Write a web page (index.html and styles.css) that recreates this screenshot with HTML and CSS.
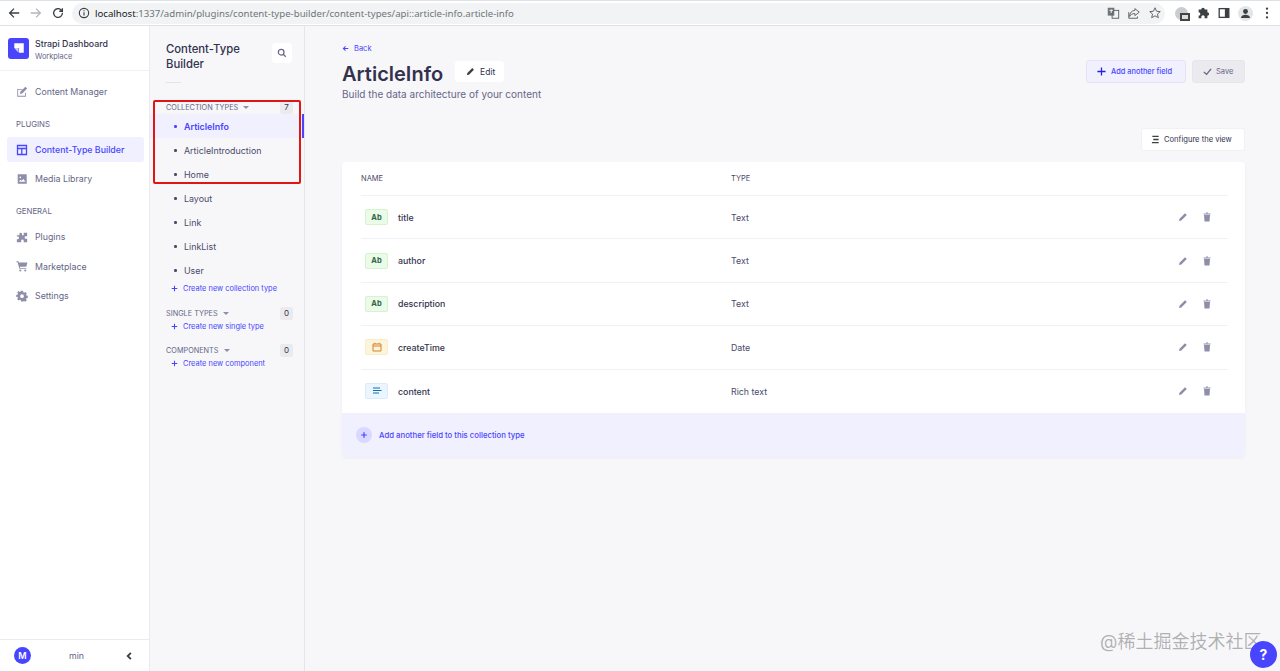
FILE: index.html
```
<!DOCTYPE html>
<html lang="en">
<head>
<meta charset="utf-8">
<title>Strapi</title>
<link rel="stylesheet" href="styles.css">
</head>
<body>
<header class="chrome">
  <div class="chrome-nav">
    <svg class="ci" viewBox="0 0 16 16"><path d="M14 8H3M8 3 3 8l5 5" class="st dark"/></svg>
    <svg class="ci" viewBox="0 0 16 16"><path d="M2 8h11M8 3l5 5-5 5" class="st light"/></svg>
    <svg class="ci" viewBox="0 0 16 16"><path d="M13 8a5 5 0 1 1-1.500-3.500L13 6V2.500M13 6H9.500" class="st dark"/></svg>
  </div>
  <div class="omni">
    <svg class="ci-small" viewBox="0 0 16 16"><circle cx="8" cy="8" r="6.200" class="st dark"/><path d="M8 7v4.400M8 4.200v1.500" class="st dark"/></svg>
    <span class="url"><b>localhost</b>:1337/admin/plugins/content-type-builder/content-types/api::article-info.article-info</span>
    <span class="omni-right">
      <svg class="ci" viewBox="0 0 16 16"><rect x="2" y="2" width="7.500" height="9" class="fillgrey"/><rect x="7" y="5" width="7.500" height="9" class="st thin"/><path d="M4 5h4M6 4v4" class="st whitest"/></svg>
      <svg class="ci" viewBox="0 0 16 16"><path d="M9 3l5 4-5 4V8.600C6 8.600 4 10 3 12c0-4 2-6.500 6-7z" class="st thin"/><path d="M2 7v7h10v-2" class="st thin"/></svg>
      <svg class="ci" viewBox="0 0 16 16"><path d="M8 2l1.800 4 4.200.4-3.200 2.800 1 4.200L8 11.200 4.200 13.400l1-4.200L2 6.400 6.200 6z" class="st thin"/></svg>
    </span>
  </div>
  <div class="chrome-ext">
    <span class="ext-globe"><span class="ext-badge"></span></span>
    <svg class="ci" viewBox="0 0 16 16"><path class="fill-dark" d="M3 4h3a2 2 0 1 1 4 0h3v3a2 2 0 1 1 0 4v3H9.500a2 2 0 1 0-3 0H3v-3a2 2 0 1 0 0-4z"/></svg>
    <svg class="ci" viewBox="0 0 16 16"><rect x="2.500" y="3" width="11" height="10" class="st dark"/><rect x="9" y="3" width="4.500" height="10" class="fill-dark"/></svg>
    <span class="profile"><svg viewBox="0 0 16 16"><circle cx="8" cy="5.500" r="3" class="fill-dark"/><path d="M2.500 13.500c0-3 3-4 5.500-4s5.500 1 5.500 4z" class="fill-dark"/></svg></span>
    <svg class="ci" viewBox="0 0 16 16"><circle cx="8" cy="3" r="1.300" class="fill-dark"/><circle cx="8" cy="8" r="1.300" class="fill-dark"/><circle cx="8" cy="13" r="1.300" class="fill-dark"/></svg>
  </div>
</header>

<div class="app">
  <aside class="side">
    <div class="brand">
      <span class="logo"><svg viewBox="0 0 20 20"><path d="M6 5h9v9h-4.500V9.500H6z" class="fill-white"/><path d="M6 9.500h4v4.500z" class="fill-white soft"/></svg></span>
      <div>
        <div class="brand-name">Strapi Dashboard</div>
        <div class="brand-sub">Workplace</div>
      </div>
    </div>
    <nav class="side-nav">
      <a class="side-link first"><svg viewBox="0 0 14 14"><path d="M1.500 3.500h6v1h-5v7h8V8h1v4.500h-10z" class="fill-grey"/><path d="M4.500 9.500l.8-3L11 1l2 2-5.500 5.500z" class="fill-grey"/></svg>Content Manager</a>
      <div class="side-title plugins">PLUGINS</div>
      <a class="side-link active"><svg viewBox="0 0 14 14"><path class="fill-blue" fill-rule="evenodd" d="M1 1h12v12H1zm1.500 3.500h9v-2h-9zm0 1.500v5.500H6V6zm5 0v5.500h4V6z"/></svg>Content-Type Builder</a>
      <a class="side-link media"><svg viewBox="0 0 14 14"><path class="fill-grey" fill-rule="evenodd" d="M2 1.500h10.500v11H2zm1.500 8.800h7.500L8.500 7 6.500 9 5 8z"/><circle cx="5" cy="5" r="1" class="fill-white"/></svg>Media Library</a>
      <div class="side-title general">GENERAL</div>
      <a class="side-link"><svg viewBox="0 0 14 14"><path class="fill-grey" d="M1 5h3V3.500a1.500 1.500 0 0 1 3 0V5h2V2h4v4h-1.500a1.500 1.500 0 0 0 0 3H13v4H9v-1.500a1.500 1.500 0 0 0-3 0V13H1V9.500h1a1.500 1.500 0 0 0 0-3H1z"/></svg>Plugins</a>
      <a class="side-link"><svg viewBox="0 0 14 14"><path class="fill-grey" d="M0.500 1.500h2.300l.5 1.500h10l-1.300 5H4.500l.4 1.200H12v1H4L1.800 2.500H.5z"/><circle cx="5" cy="12.200" r="1.200" class="fill-grey"/><circle cx="10.800" cy="12.200" r="1.200" class="fill-grey"/></svg>Marketplace</a>
      <a class="side-link"><svg viewBox="0 0 14 14"><path class="fill-grey" fill-rule="evenodd" d="M5.800 1h2.400l.3 1.700 1 .5 1.500-.9 1.600 1.700-.9 1.400.5 1.100 1.600.3v2.400l-1.600.3-.5 1.100.9 1.400-1.600 1.700-1.500-.9-1 .5L8.200 13.500H5.800l-.3-1.700-1-.5-1.500.9-1.600-1.700.9-1.400-.5-1.100L.2 8.200V5.800l1.600-.3.5-1.100-.9-1.400L3 1.300l1.500.9 1-.5zM7 5a2.200 2.200 0 1 0 0 4.400A2.200 2.200 0 0 0 7 5z"/></svg>Settings</a>
    </nav>
    <div class="side-foot">
      <span class="avatar">M</span>
      <span class="foot-name">min</span>
      <svg class="foot-chev" viewBox="0 0 8 8"><path d="M5.500 1.500 3 4l2.500 2.500" class="st dark"/></svg>
    </div>
  </aside>

  <aside class="sub">
    <div class="sub-head">
      <h2>Content-Type Builder</h2>
      <span class="search"><svg viewBox="0 0 12 12"><circle cx="5" cy="5" r="3.400" class="st grey-st"/><path d="M7.500 7.500 10.500 10.500" class="st grey-st"/></svg></span>
    </div>
    <div class="sub-rule"></div>
    <section class="group collection">
      <div class="group-head"><span>COLLECTION TYPES</span><i class="caret"></i><em class="count">7</em></div>
      <ul>
        <li class="current">ArticleInfo</li>
        <li>ArticleIntroduction</li>
        <li>Home</li>
        <li>Layout</li>
        <li>Link</li>
        <li>LinkList</li>
        <li>User</li>
      </ul>
      <a class="create"><svg viewBox="0 0 10 10"><path d="M5 1v8M1 5h8" class="st blue-st"/></svg>Create new collection type</a>
    </section>
    <section class="group">
      <div class="group-head"><span>SINGLE TYPES</span><i class="caret"></i><em class="count">0</em></div>
      <a class="create"><svg viewBox="0 0 10 10"><path d="M5 1v8M1 5h8" class="st blue-st"/></svg>Create new single type</a>
    </section>
    <section class="group">
      <div class="group-head"><span>COMPONENTS</span><i class="caret"></i><em class="count">0</em></div>
      <a class="create"><svg viewBox="0 0 10 10"><path d="M5 1v8M1 5h8" class="st blue-st"/></svg>Create new component</a>
    </section>
  </aside>

  <main class="main">
    <a class="back"><svg viewBox="0 0 10 10"><path d="M9 5H2M5 2 2 5l3 3" class="st blue-st"/></svg>Back</a>
    <div class="title-row">
      <div>
        <div class="title-line">
          <h1>ArticleInfo</h1>
          <button class="btn edit"><svg viewBox="0 0 10 10"><path d="M1 9l.5-2.300L7 1.200 8.800 3 3.300 8.500z" class="fill-dark"/></svg>Edit</button>
        </div>
        <p class="subtitle">Build the data architecture of your content</p>
      </div>
      <div class="actions">
        <button class="btn add"><svg viewBox="0 0 10 10"><path d="M5 .5v9M.5 5h9" class="st deep-st"/></svg>Add another field</button>
        <button class="btn save"><svg viewBox="0 0 10 10"><path d="M1 5.500 4 8.200 9 2" class="st grey-st"/></svg>Save</button>
      </div>
    </div>
    <div class="config-row">
      <button class="btn config"><svg viewBox="0 0 10 10"><path d="M1.500 1.500h7M2.500 5h6M1 8.500h7.500" class="st dark"/></svg>Configure the view</button>
    </div>
    <div class="card">
      <div class="table">
        <div class="row head"><span class="c-name">NAME</span><span class="c-type">TYPE</span></div>
        <div class="row">
          <span class="c-name"><span class="chip green">Ab</span>title</span><span class="c-type">Text</span>
          <span class="row-tools"><svg viewBox="0 0 10 10"><path d="M1 9l.5-2.300L7 1.200 8.800 3 3.300 8.500z" class="fill-grey"/></svg><svg viewBox="0 0 10 10"><path d="M2 3h6l-.5 6.500h-5zM1.500 1.500h7v1h-7z" class="fill-grey"/><path d="M4 .5h2v1H4z" class="fill-grey"/></svg></span>
        </div>
        <div class="row">
          <span class="c-name"><span class="chip green">Ab</span>author</span><span class="c-type">Text</span>
          <span class="row-tools"><svg viewBox="0 0 10 10"><path d="M1 9l.5-2.300L7 1.200 8.800 3 3.300 8.500z" class="fill-grey"/></svg><svg viewBox="0 0 10 10"><path d="M2 3h6l-.5 6.500h-5zM1.500 1.500h7v1h-7z" class="fill-grey"/><path d="M4 .5h2v1H4z" class="fill-grey"/></svg></span>
        </div>
        <div class="row">
          <span class="c-name"><span class="chip green">Ab</span>description</span><span class="c-type">Text</span>
          <span class="row-tools"><svg viewBox="0 0 10 10"><path d="M1 9l.5-2.300L7 1.200 8.800 3 3.300 8.500z" class="fill-grey"/></svg><svg viewBox="0 0 10 10"><path d="M2 3h6l-.5 6.500h-5zM1.500 1.500h7v1h-7z" class="fill-grey"/><path d="M4 .5h2v1H4z" class="fill-grey"/></svg></span>
        </div>
        <div class="row">
          <span class="c-name"><span class="chip orange"><svg viewBox="0 0 10 10"><path d="M1 2h8v7H1zM1 4h8M3 .8V2M7 .8V2" class="st orange-st"/></svg></span>createTime</span><span class="c-type">Date</span>
          <span class="row-tools"><svg viewBox="0 0 10 10"><path d="M1 9l.5-2.300L7 1.200 8.800 3 3.300 8.500z" class="fill-grey"/></svg><svg viewBox="0 0 10 10"><path d="M2 3h6l-.5 6.500h-5zM1.500 1.500h7v1h-7z" class="fill-grey"/><path d="M4 .5h2v1H4z" class="fill-grey"/></svg></span>
        </div>
        <div class="row last">
          <span class="c-name"><span class="chip blue"><svg viewBox="0 0 10 10"><path d="M1 2h7M1 4.500h8.500M1 7h6" class="st blue2-st"/></svg></span>content</span><span class="c-type">Rich text</span>
          <span class="row-tools"><svg viewBox="0 0 10 10"><path d="M1 9l.5-2.300L7 1.200 8.800 3 3.300 8.500z" class="fill-grey"/></svg><svg viewBox="0 0 10 10"><path d="M2 3h6l-.5 6.500h-5zM1.500 1.500h7v1h-7z" class="fill-grey"/><path d="M4 .5h2v1H4z" class="fill-grey"/></svg></span>
        </div>
      </div>
      <a class="add-foot"><span class="add-circle"><svg viewBox="0 0 10 10"><path d="M5 1.500v7M1.500 5h7" class="st blue-st"/></svg></span>Add another field to this collection type</a>
    </div>
  </main>
</div>

<div class="redbox"></div>
<div class="watermark">@稀土掘金技术社区</div>
<div class="help">?</div>
</body>
</html>
```

FILE: styles.css
```
* { box-sizing: border-box; }
html, body { margin: 0; height: 100%; }
body {
  font-family: Inter, "Noto Sans", "Noto Sans CJK SC", sans-serif;
  background: #f7f7fa;
  color: #32324d;
  overflow: hidden;
  height: 671px;
  display: flex;
  flex-direction: column;
}
svg { display: block; flex: none; }
.st { fill: none; stroke-width: 1.500; }
.dark { stroke: #3c4043; }
.light { stroke: #b4b7bb; }
.thin { stroke: #5f6368; stroke-width: 1.100; }
.whitest { stroke: #fff; stroke-width: 1; }
.fillgrey { fill: #70757a; }
.fill-dark { fill: #3c4043; }
.fill-white { fill: #fff; }
.soft { opacity: .7; }
.fill-grey { fill: #8e8ea9; }
.fill-blue { fill: #4945ff; }
.grey-st { stroke: #666687; }
.blue-st { stroke: #4945ff; }
.deep-st { stroke: #271fe0; stroke-width: 1.400; }
.orange-st { stroke: #d9822f; stroke-width: 1; }
.blue2-st { stroke: #0c75af; stroke-width: 1; }

.chrome {
  flex: none;
  height: 26px;
  background: #fff;
  border-top: 1px solid #dee1e6;
  border-bottom: 1px solid #dfe1e5;
  display: flex;
  align-items: center;
  padding: 0 6px 0 7px;
}
.chrome-nav { display: flex; gap: 8px; width: 62px; }
.ci { width: 14px; height: 14px; }
.ci-small { width: 12px; height: 12px; }
.omni {
  flex: 1;
  height: 21px;
  background: #f1f3f4;
  border-radius: 11px;
  margin-left: 3px;
  padding: 0 3px 0 6px;
  display: flex;
  align-items: center;
  gap: 5px;
}
.url { font-family: "Noto Sans", sans-serif; font-size: 9.650px; color: #70757a; white-space: nowrap; }
.url b { font-weight: 400; color: #202124; }
.omni-right { margin-left: auto; display: flex; gap: 7px; }
.chrome-ext { display: flex; align-items: center; gap: 7px; margin-left: 10px; }
.ext-globe { width: 13px; height: 13px; border-radius: 50%; background: #c9ccd0; position: relative; margin-right: 1px; }
.ext-badge { position: absolute; left: 5px; top: 6px; width: 10px; height: 8px; border: 2px solid #444; background: #ddd; }
.profile { width: 15px; height: 15px; border-radius: 50%; background: #e3e5e8; padding: 1px; }
.app { flex: 1; display: flex; min-height: 0; }

.side {
  width: 150px;
  flex: none;
  background: #fff;
  border-right: 1px solid #eaeaef;
  display: flex;
  flex-direction: column;
}
.brand {
  height: 40px;
  flex: none;
  margin-top: 5px;
  display: flex;
  gap: 6px;
  padding: 7px 0 0 8px;
  border-bottom: 1px solid #f0f0f5;
  align-items: flex-start;
}
.logo { width: 21px; height: 21px; border-radius: 3px; background: #4945ff; display: block; }
.brand-name { font-size: 8.800px; font-weight: 500; line-height: 12px; color: #32324d; white-space: nowrap; }
.brand-sub { font-size: 7.400px; line-height: 11px; color: #666687; margin-top: 1px; }
.side-nav { flex: 1; padding: 0 5px 0 7px; display: flex; flex-direction: column; }
.side-link {
  height: 25px;
  display: flex;
  align-items: center;
  gap: 7px;
  padding-left: 9px;
  font-size: 8.800px;
  color: #666687;
  border-radius: 3px;
  white-space: nowrap;
  margin-bottom: 4.500px;
}
.side-link svg { width: 12px; height: 12px; }
.side-link.first { margin-top: 8px; margin-bottom: 0; }
.side-link.active {
  background: #f0f0ff;
  color: #4945ff;
  font-weight: 500;
  margin-bottom: 4px;
}
.side-link.media { margin-bottom: 0; }
.side-title { font-size: 7.800px; color: #666687; padding-left: 9px; line-height: 10px; }
.plugins { margin: 14.500px 0 8.500px; }
.general { margin: 14.500px 0 8.500px; }
.side-foot {
  height: 32px;
  flex: none;
  border-top: 1px solid #eaeaef;
  display: flex;
  align-items: center;
  padding: 0 15px 0 14px;
}
.avatar {
  width: 17px; height: 17px; border-radius: 50%;
  background: #4945ff; color: #fff;
  font-size: 9px; font-weight: 600;
  display: flex; align-items: center; justify-content: center;
}
.foot-name { flex: 1; text-align: center; font-size: 8.800px; color: #666687; margin-left: 6px; margin-right: 8px; }
.foot-chev { width: 10px; height: 10px; }

.sub {
  width: 155px;
  flex: none;
  background: #f7f7fa;
  border-right: 1px solid #e5e5ec;
  padding-top: 16px;
}
.sub-head { display: flex; justify-content: space-between; align-items: flex-start; padding: 0 12px 0 16px; }
.sub-head h2 { margin: 0; font-size: 11.300px; line-height: 15px; font-weight: 500; width: 90px; color: #32324d; }
.search {
  width: 20px; height: 20px; background: #fff; border-radius: 3px; margin-top: 1px;
  display: flex; align-items: center; justify-content: center;
}
.search svg { width: 10px; height: 10px; }
.sub-rule { width: 15px; height: 1px; background: #e3e3ea; margin: 10px 0 0 16px; }
.group { margin-top: 12.500px; }
.collection { margin-top: 17.500px; }
.group-head {
  height: 13px;
  display: flex;
  align-items: center;
  padding: 0 11px 0 16px;
  font-size: 7.300px;
  color: #666687;
  white-space: nowrap;
}
.caret {
  width: 0; height: 0; margin-left: 5px;
  border-left: 3px solid transparent;
  border-right: 3px solid transparent;
  border-top: 3px solid #8e8ea9;
}
.count {
  margin-left: auto;
  width: 13px; height: 13px;
  background: #eaeaef; color: #32324d;
  font-style: normal; font-size: 8px; text-align: center; line-height: 13px;
  border-radius: 2px;
}
.group ul { list-style: none; margin: .5px 0 1px; padding: 0; }
.group li {
  height: 24px;
  font-size: 8.900px;
  color: #4a4a6a;
  display: flex;
  align-items: center;
  padding-left: 34px;
  position: relative;
}
.group li::before {
  content: "";
  position: absolute;
  left: 24px; top: 11px;
  width: 2.500px; height: 2.500px;
  border-radius: 50%;
  background: #4a4a6a;
}
.group li.current {
  background: #f0f0ff;
  color: #4945ff;
  font-weight: 600;
}
.group li.current::before { background: #4945ff; }
.group li.current::after {
  content: "";
  position: absolute;
  right: 0; top: 0;
  width: 2px; height: 24px;
  background: #4945ff;
}
.create {
  display: flex;
  align-items: center;
  gap: 5px;
  padding-left: 21px;
  font-size: 7.450px;
  color: #4945ff;
  height: 11px;
  margin-top: 1px;
  white-space: nowrap;
}
.group ul + .create { margin-top: 0; }
.create svg { width: 7px; height: 7px; }

.main { flex: 1; padding: 17px 35px 0 37px; min-width: 0; }
.back { display: flex; align-items: center; gap: 5px; font-size: 7.500px; color: #4945ff; height: 11px; }
.back svg { width: 7px; height: 7px; }
.title-row { display: flex; justify-content: space-between; margin-top: 7px; }
.title-line { display: flex; align-items: flex-start; gap: 12px; height: 26px; }
h1 { margin: 0; font-size: 20px; line-height: 26px; font-weight: 600; color: #32324d; }
.subtitle { margin: .5px 0 0; font-size: 10px; line-height: 13px; color: #666687; }
.btn {
  font-family: inherit;
  border: 0;
  display: flex;
  align-items: center;
  white-space: nowrap;
  border-radius: 3px;
  padding: 0;
  cursor: pointer;
}
.btn svg { flex: none; }
.edit {
  width: 49px; height: 21px; background: #fff; font-size: 8.500px; color: #32324d;
  gap: 5px; padding-left: 11px;
}
.edit svg { width: 9px; height: 9px; }
.actions { display: flex; gap: 6px; margin-top: -1px; }
.add {
  width: 100px; height: 23px; background: #f0f0ff; border: 1px solid #e4e3fb;
  color: #4945ff; font-size: 7.400px; font-weight: 500; gap: 5px; padding-left: 10px;
}
.add svg { width: 9px; height: 9px; }
.save {
  width: 53px; height: 23px; background: #eaeaef; border: 1px solid #e6e6ec;
  color: #666687; font-size: 7.500px; gap: 4px; padding-left: 10px;
}
.save svg { width: 9px; height: 9px; }
.config-row { display: flex; justify-content: flex-end; margin-top: 27px; }
.config {
  width: 104px; height: 23px; background: #fff; border: 1px solid #f0f0f5;
  color: #32324d; font-size: 7.600px; gap: 4px; padding-left: 9px;
}
.config svg { width: 9px; height: 9px; }
.card {
  margin-top: 11.500px;
  background: #fff;
  border-radius: 4px;
  overflow: hidden;
  box-shadow: 0 1px 3px rgba(33,33,52,.05);
}
.table { padding: 0 17px 0 19px; }
.row {
  height: 43.400px;
  display: flex;
  align-items: center;
  border-bottom: 1px solid #f0f0f5;
  font-size: 8.800px;
  color: #32324d;
  position: relative;
}
.row.head { height: 34px; font-size: 7.500px; color: #4a4a6a; }
.row.last { border-bottom: 0; }
.c-name { width: 370px; display: flex; align-items: center; gap: 10px; font-weight: 500; }
.row:not(.head) .c-name { padding-left: 4px; }
.head .c-name { font-weight: 400; }
.c-type { color: #4a4a6a; }
.row-tools { position: absolute; right: 16px; top: 50%; transform: translateY(-50%); display: flex; gap: 14px; }
.row-tools svg { width: 10px; height: 10px; }
.chip {
  width: 23px; height: 16px; border-radius: 2px;
  display: flex; align-items: center; justify-content: center;
  font-size: 7.500px; font-weight: 700;
}
.chip svg { width: 10px; height: 10px; }
.chip.green { background: #eafbe7; color: #2f6846; border: 1px solid #d6f2d2; }
.chip.orange { background: #fdf4dc; border: 1px solid #faecc8; }
.chip.blue { background: #eaf5ff; border: 1px solid #d9ecfc; }
.add-foot {
  height: 44px;
  background: #f0f0ff;
  display: flex;
  align-items: center;
  gap: 7px;
  padding-left: 14px;
  color: #4945ff;
  font-size: 7.750px;
  font-weight: 500;
}
.add-circle {
  width: 16px; height: 16px; border-radius: 50%; background: #d9d8ff;
  display: flex; align-items: center; justify-content: center;
}
.add-circle svg { width: 8px; height: 8px; }

.redbox {
  position: absolute;
  left: 153px; top: 100px;
  width: 148px; height: 84px;
  border: 2px solid #e01515;
  border-radius: 2px;
}
.watermark {
  position: absolute;
  left: 1100px; top: 630px;
  font-size: 18px;
  line-height: 24px;
  color: rgba(60,60,60,.38);
  white-space: nowrap;
}
.help {
  position: absolute;
  left: 1250px; top: 641px;
  width: 27px; height: 27px;
  border-radius: 50%;
  background: #4945ff;
  color: #fff;
  font-size: 14px;
  font-weight: 700;
  text-align: center;
  line-height: 27px;
}
```
